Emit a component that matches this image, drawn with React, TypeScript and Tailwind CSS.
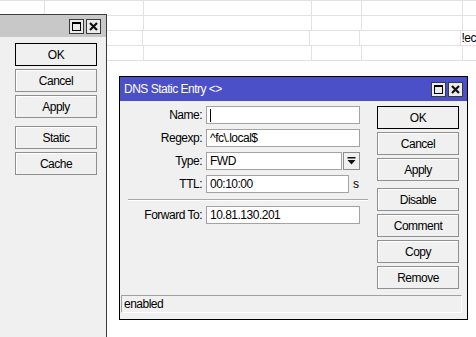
import clsx from "clsx";

const cols = [45, 99, 168, 50, 101];

const Btn = ({ label, def, className }: { label: string; def?: boolean; className?: string }) => (
  <div
    className={clsx(
      "flex h-[23px] w-[82px] items-center justify-center border bg-[#f0f0f0]",
      def ? "border-black" : "border-[#8f8f8f] shadow-[inset_1px_1px_0_#ffffff]",
      className
    )}
  >
    {label}
  </div>
);

const TitleButtons = () => (
  <div className="flex gap-[2px]">
    <div className="flex h-[15px] w-[15px] items-center justify-center border border-[#3a3a3a] bg-[#ececec]">
      <div className="h-[9px] w-[9px] border border-t-2 border-black" />
    </div>
    <div className="flex h-[15px] w-[15px] items-center justify-center border border-[#3a3a3a] bg-[#ececec]">
      <svg width="9" height="9" viewBox="0 0 9 9">
        <path d="M1 1 L8 8 M8 1 L1 8" stroke="#111" strokeWidth="2.2" />
      </svg>
    </div>
  </div>
);

const Field = ({ label, children }: { label: string; children: React.ReactNode }) => (
  <div className="flex h-[18px] items-center gap-[4px]">
    <div className="w-[78px] text-right">{label}</div>
    {children}
  </div>
);

const Input = ({ value, w, cursor }: { value?: string; w: string; cursor?: boolean }) => (
  <div className={clsx("flex h-[18px] items-center border border-[#a3a3a3] bg-white pl-[3px]", w)}>
    {cursor && <div className="h-[13px] w-px bg-black" />}
    {value}
  </div>
);

export default function App() {
  return (
    <div className="relative h-[337px] w-[476px] overflow-hidden bg-white font-['Liberation_Sans',Arial,sans-serif] text-[12px] leading-none tracking-[-0.5px] text-black">
      {/* background table */}
      <div className="border-t border-[#e2e2e2]">
        {[0, 1, 2, 3].map((r) => (
          <div key={r} className="flex h-[15px] border-b border-[#e2e2e2]">
            {cols.map((w, i) => (
              <div key={i} className="h-full border-r border-[#e2e2e2]" style={{ width: w }} />
            ))}
            <div className="flex flex-1 items-center pl-[1px]">{r === 2 ? "!ec" : ""}</div>
          </div>
        ))}
      </div>

      {/* left window */}
      <div className="absolute bottom-0 left-0 top-[14px] flex w-[107px] flex-col border-r border-t border-[#3c3c3c] bg-[#f0f0f0]">
        <div className="flex h-[22px] items-center justify-end bg-[#c8c8c8] pr-[5px]">
          <TitleButtons />
        </div>
        <div className="flex flex-col gap-[3px] pl-[15px] pt-[6px]">
          <Btn label="OK" def />
          <Btn label="Cancel" />
          <Btn label="Apply" />
          <Btn label="Static" className="mt-[5px]" />
          <Btn label="Cache" />
        </div>
      </div>

      {/* DNS Static Entry window */}
      <div className="absolute left-[119px] top-[76px] flex h-[244px] w-[349px] flex-col border border-black bg-[#f0f0f0]">
        <div className="flex h-[24px] items-center justify-between bg-[#4b4fc8] pl-[4px] pr-[4px] text-white">
          <span>DNS Static Entry &lt;&gt;</span>
          <TitleButtons />
        </div>

        <div className="flex pt-[5px]">
          <div className="flex w-[240px] flex-col">
            <div className="flex flex-col gap-[5px] pl-[4px]">
              <Field label="Name:">
                <Input w="w-[154px]" cursor />
              </Field>
              <Field label="Regexp:">
                <Input w="w-[154px]" value="^fc\.local$" />
              </Field>
              <Field label="Type:">
                <div className="flex gap-[1px]">
                  <Input w="w-[136px]" value="FWD" />
                  <div className="flex h-[18px] w-[17px] items-center justify-center border border-[#8f8f8f] bg-[#f0f0f0]">
                    <svg width="9" height="8" viewBox="0 0 9 8">
                      <rect x="0.5" y="0" width="8" height="1.5" fill="#111" />
                      <path d="M0.5 3 H8.5 L4.5 7.5 Z" fill="#111" />
                    </svg>
                  </div>
                </div>
              </Field>
              <Field label="TTL:">
                <Input w="w-[143px]" value="00:10:00" />
                <span>s</span>
              </Field>
            </div>
            <div className="ml-[8px] mt-[6px] h-px w-[240px] bg-[#a8a8a8] shadow-[0_1px_0_#ffffff]" />
            <div className="mt-[6px] pl-[4px]">
              <Field label="Forward To:">
                <Input w="w-[154px]" value="10.81.130.201" />
              </Field>
            </div>
          </div>

          <div className="ml-[17px] flex flex-col gap-[3px]">
            <Btn label="OK" def />
            <Btn label="Cancel" />
            <Btn label="Apply" />
            <Btn label="Disable" className="mt-[4px]" />
            <Btn label="Comment" />
            <Btn label="Copy" />
            <Btn label="Remove" />
          </div>
        </div>

        <div className="flex-1" />
        <div className="mb-[6px] ml-[1px] mr-[5px] flex h-[18px] items-center border border-b-white border-l-[#a0a0a0] border-r-white border-t-[#a0a0a0] pl-[2px]">
          enabled
        </div>
      </div>
    </div>
  );
}
